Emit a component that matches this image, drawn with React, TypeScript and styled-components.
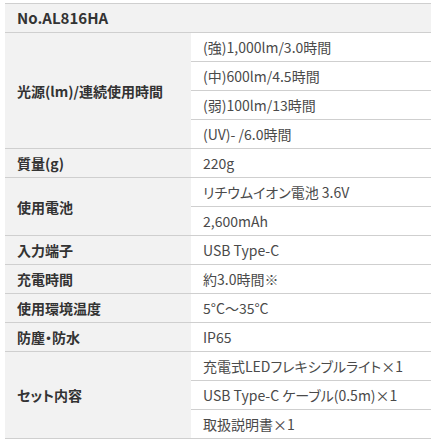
import React from 'react'
import styled, { createGlobalStyle } from 'styled-components'

interface Spec {
  label: string
  values: string[]
}
const specs: Spec[] = [
  {
    label: '光源(lm)/連続使用時間',
    values: ['(強)1,000lm/3.0時間', '(中)600lm/4.5時間', '(弱)100lm/13時間', '(UV)- /6.0時間'],
  },
  { label: '質量(g)', values: ['220g'] },
  { label: '使用電池', values: ['リチウムイオン電池 3.6V', '2,600mAh'] },
  { label: '入力端子', values: ['USB Type-C'] },
  { label: '充電時間', values: ['約3.0時間※'] },
  { label: '使用環境温度', values: ['5°C～35°C'] },
  { label: '防塵・防水', values: ['IP65'] },
  {
    label: 'セット内容',
    values: ['充電式LEDフレキシブルライト×1', 'USB Type-C ケーブル(0.5m)×1', '取扱説明書×1'],
  },
]

const App = () => {
  return (
    <>
      <GlobalStyle />
      <Page>
        <SpecTable>
          <Header>No.AL816HA</Header>
          {specs.map((spec, index) => (
            <Row key={index}>
              <Label>{spec.label}</Label>
              <Values>
                {spec.values.map((value, i) => (
                  <Value key={i}>{value}</Value>
                ))}
              </Values>
            </Row>
          ))}
        </SpecTable>
      </Page>
    </>
  )
}

const GlobalStyle = createGlobalStyle`
  body {
    margin: 0;
    background: #fff;
    font-family: "Noto Sans CJK JP", "Noto Sans", sans-serif;
    font-feature-settings: "palt";
  }
`
const Page = styled.div`
  padding: 3px 3px 0 5px;
`
const SpecTable = styled.div`
  display: flex;
  flex-direction: column;
  border-top: 1px solid #cfcfcf;
`
const Header = styled.div`
  height: 28px;
  line-height: 28px;
  padding-left: 12px;
  background-color: #f2f2f2;
  border-bottom: 1px solid #cfcfcf;
  font-size: 15px;
  font-weight: 700;
  color: #333;
`
const Row = styled.div`
  display: flex;
  border-bottom: 1px solid #cfcfcf;
`
const Label = styled.div`
  width: 186px;
  flex-shrink: 0;
  display: flex;
  align-items: center;
  padding-left: 12px;
  box-sizing: border-box;
  background-color: #f2f2f2;
  font-size: 14px;
  font-weight: 700;
  color: #333;
`
const Values = styled.div`
  flex: 1;
  display: flex;
  flex-direction: column;
`
const Value = styled.div`
  height: 28px;
  line-height: 28px;
  padding-left: 12px;
  font-size: 14px;
  color: #4a4a4a;
  white-space: nowrap;

  & + & {
    border-top: 1px solid #cfcfcf;
  }
`
export default App
